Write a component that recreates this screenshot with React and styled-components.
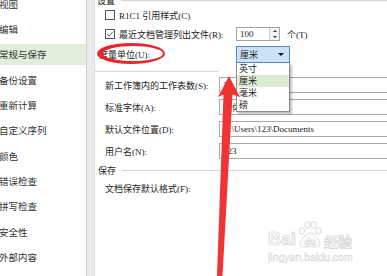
import React from 'react';
import styled, { createGlobalStyle } from 'styled-components';

const GlobalStyle = createGlobalStyle`
  html, body {
    margin: 0;
    padding: 0;
    background: #fff;
  }
  body {
    font-family: "Liberation Serif", "Noto Sans CJK SC", serif;
    color: #222;
  }
`;

const Window = styled.div`
  position: relative;
  display: flex;
  width: 387px;
  height: 276px;
  overflow: hidden;
  background: #fff;
`;

/* 左侧分类列表 */
const Sidebar = styled.ul`
  flex: 0 0 86px;
  margin: -7px 0 0;
  padding: 0;
  list-style: none;
  font-family: "Noto Sans CJK SC", sans-serif;
  font-size: 9.5px;
  color: #333;
`;

const NavItem = styled.li`
  height: 21px;
  margin-bottom: 4.35px;
  display: flex;
  align-items: center;
  text-indent: -1px;
  white-space: nowrap;
  background: ${(p) => (p.$active ? '#e1eed9' : 'transparent')};
`;

const Splitter = styled.div`
  flex: 0 0 9px;
  box-sizing: border-box;
  border-left: 1px solid #cfcfcf;
  border-right: 1px solid #dcdcdc;
  background: #ececec;
`;

const Panel = styled.div`
  flex: 1;
  min-width: 0;
  display: flex;
  flex-direction: column;
  font-size: 9px;
  overflow: hidden;
`;

const GroupTitle = styled.div`
  display: flex;
  align-items: center;
  height: 12px;
  margin-top: ${(p) => p.$top}px;
  padding-left: ${(p) => p.$indent}px;
  font-family: "Noto Sans CJK SC", sans-serif;
  white-space: nowrap;
  &::after {
    content: '';
    flex: 1;
    height: 1px;
    margin-left: 6px;
    background: #d4d4d4;
  }
`;

const OptionRow = styled.div`
  display: flex;
  align-items: center;
  height: ${(p) => p.$h}px;
  margin-top: ${(p) => p.$top || 0}px;
  padding-left: ${(p) => p.$indent}px;
  white-space: nowrap;
`;

const CheckBox = styled.span`
  flex-shrink: 0;
  width: 10px;
  height: 10px;
  box-sizing: border-box;
  margin-right: 4px;
  border: 1px solid #555;
  background: #fff;
  display: flex;
  align-items: center;
  justify-content: center;
`;

const OptionText = styled.span`
  flex-shrink: 0;
  width: ${(p) => (p.$w ? `${p.$w}px` : 'auto')};
`;

const SpinBox = styled.div`
  display: flex;
  width: 44px;
  height: 14px;
  box-sizing: border-box;
  border: 1px solid #a3a3a3;
  background: #fff;
`;

const SpinValue = styled.span`
  flex: 1;
  padding-left: 3px;
  line-height: 12px;
`;

const SpinButtons = styled.div`
  width: 9px;
  display: flex;
  flex-direction: column;
  border-left: 1px solid #cfcfcf;
  background: #f2f2f2;
`;

const SpinButton = styled.span`
  flex: 1;
  display: flex;
  align-items: center;
  justify-content: center;
  &::before {
    content: '';
    border-left: 2.5px solid transparent;
    border-right: 2.5px solid transparent;
    ${(p) => (p.$up ? 'border-bottom' : 'border-top')}: 2.5px solid #333;
  }
`;

const Unit = styled.span`
  margin-left: 7px;
`;

const SelectWrap = styled.div`
  position: relative;
`;

const SelectBox = styled.div`
  display: flex;
  align-items: center;
  justify-content: space-between;
  width: 54px;
  height: 17px;
  box-sizing: border-box;
  padding: 0 5px 0 3px;
  border: 1px solid #4d8ac6;
  background: #cce3f6;
  font-family: "Noto Sans CJK SC", sans-serif;
`;

const Caret = styled.span`
  width: 0;
  height: 0;
  border-left: 3px solid transparent;
  border-right: 3px solid transparent;
  border-top: 3px solid #111;
`;

/* 展开的下拉列表 */
const DropList = styled.ul`
  position: absolute;
  top: 100%;
  left: 0;
  z-index: 2;
  width: 54px;
  margin: 0;
  padding: 0;
  list-style: none;
  box-sizing: border-box;
  border: 1px solid #8c8c8c;
  border-top: none;
  background: #fff;
  box-shadow: 2px 2px 2px rgba(0, 0, 0, 0.25);
  font-family: "Noto Sans CJK SC", sans-serif;
`;

const DropItem = styled.li`
  height: 12px;
  line-height: 12px;
  padding-left: 2px;
  background: ${(p) => (p.$active ? '#dcebd3' : 'transparent')};
`;

const Divider = styled.div`
  width: 123px;
  height: 1px;
  margin-top: 7px;
  background: #d6d6d6;
`;

const FieldGrid = styled.div`
  display: grid;
  grid-template-columns: 114px 1fr;
  grid-auto-rows: 16px;
  row-gap: 6px;
  margin-top: 5px;
  padding-left: 10px;
  align-items: center;
`;

const FieldLabel = styled.span`
  white-space: nowrap;
`;

const TextField = styled.div`
  height: 16px;
  box-sizing: border-box;
  display: flex;
  align-items: center;
  padding-left: 3px;
  border: 1px solid #a9a9a9;
  border-right: none;
  background: #fff;
  white-space: nowrap;
`;

const Overlay = styled.svg`
  position: absolute;
  left: 0;
  top: 0;
  z-index: 3;
  pointer-events: none;
`;

const Watermark = styled.div`
  position: absolute;
  left: 268px;
  top: 221px;
  z-index: 1;
  display: flex;
  flex-direction: column;
  pointer-events: none;
`;

const WmLogo = styled.div`
  display: flex;
  align-items: flex-end;
  gap: 2px;
`;

const WmWord = styled.span`
  font-family: ${(p) => (p.$cjk ? '"Noto Sans CJK SC", sans-serif' : '"Liberation Sans", sans-serif')};
  font-weight: 700;
  font-size: ${(p) => p.$size}px;
  line-height: 1;
  color: #fbfbfb;
  -webkit-text-stroke: 0.7px #d4d4d4;
`;

const WmUrl = styled.span`
  margin-top: 4px;
  font-family: "Liberation Sans", sans-serif;
  font-size: 10.5px;
  line-height: 1;
  color: #fbfbfb;
  -webkit-text-stroke: 0.5px #d8d8d8;
`;

const navItems = [
  '视图', '编辑', '常规与保存', '备份设置', '重新计算', '自定义序列',
  '颜色', '错误检查', '拼写检查', '安全性', '外部内容',
];

const units = ['英寸', '厘米', '毫米', '磅'];

const fields = [
  ['新工作簿内的工作表数(S):', '1'],
  ['标准字体(A):', '宋体'],
  ['默认文件位置(D):', 'C:\\Users\\123\\Documents'],
  ['用户名(N):', '123'],
];

const Paw = () => (
  <svg width="24" height="27" viewBox="0 0 24 27">
    <g fill="#fbfbfb" stroke="#d2d2d2" strokeWidth="0.8">
      <ellipse cx="4" cy="10" rx="2.6" ry="3.3" />
      <ellipse cx="9.5" cy="4" rx="2.7" ry="3.4" />
      <ellipse cx="15.5" cy="4" rx="2.7" ry="3.4" />
      <ellipse cx="20.5" cy="10" rx="2.6" ry="3.3" />
      <path d="M12 12 C16 12 22 19 22 22.5 C22 26 18 26.5 12 25.5 C6 26.5 2 26 2 22.5 C2 19 8 12 12 12 Z" />
    </g>
    <text
      x="12"
      y="24"
      textAnchor="middle"
      fontFamily="Liberation Sans, sans-serif"
      fontWeight="700"
      fontSize="9"
      fill="#fbfbfb"
      stroke="#d2d2d2"
      strokeWidth="0.5"
    >
      du
    </text>
  </svg>
);

const App = () => (
  <Window>
    <GlobalStyle />
    <Sidebar>
      {navItems.map((name) => (
        <NavItem key={name} $active={name === '常规与保存'}>
          {name}
        </NavItem>
      ))}
    </Sidebar>
    <Splitter />
    <Panel>
      <GroupTitle $top={-6} $indent={2}>设置</GroupTitle>
      <OptionRow $h={18} $indent={10}>
        <CheckBox />
        <OptionText>R1C1 引用样式(C)</OptionText>
      </OptionRow>
      <OptionRow $h={20} $indent={10}>
        <CheckBox>
          <svg width="8" height="8" viewBox="0 0 8 8">
            <path d="M1 4 L3.2 6.2 L7 1.5" fill="none" stroke="#666" strokeWidth="1" />
          </svg>
        </CheckBox>
        <OptionText $w={117}>最近文档管理列出文件(R):</OptionText>
        <SpinBox>
          <SpinValue>100</SpinValue>
          <SpinButtons>
            <SpinButton $up />
            <SpinButton />
          </SpinButtons>
        </SpinBox>
        <Unit>个(T)</Unit>
      </OptionRow>
      <OptionRow $h={20} $indent={4}>
        <OptionText $w={137}>度量单位(U):</OptionText>
        <SelectWrap>
          <SelectBox>
            厘米
            <Caret />
          </SelectBox>
          <DropList>
            {units.map((u) => (
              <DropItem key={u} $active={u === '厘米'}>
                {u}
              </DropItem>
            ))}
          </DropList>
        </SelectWrap>
      </OptionRow>
      <Divider />
      <FieldGrid>
        {fields.map(([label, value]) => (
          <React.Fragment key={label}>
            <FieldLabel>{label}</FieldLabel>
            <TextField>{value}</TextField>
          </React.Fragment>
        ))}
      </FieldGrid>
      <GroupTitle $top={5} $indent={3}>保存</GroupTitle>
      <OptionRow $h={16} $top={4} $indent={10}>
        <OptionText>文档保存默认格式(F):</OptionText>
      </OptionRow>
    </Panel>

    <Watermark>
      <WmLogo>
        <WmWord $size={18}>Bai</WmWord>
        <Paw />
        <WmWord $size={14} $cjk>经验</WmWord>
      </WmLogo>
      <WmUrl>jingyan.baidu.com</WmUrl>
    </Watermark>

    {/* 红色圈注与箭头 */}
    <Overlay width="387" height="276" viewBox="0 0 387 276">
      <path
        fillRule="evenodd"
        fill="#e8262b"
        d="M97 53.5 A34 10.5 0 1 0 165 53.5 A34 10.5 0 1 0 97 53.5 Z
           M103 53.5 A30 7.6 0 1 0 163 53.5 A30 7.6 0 1 0 103 53.5 Z"
      />
      <polygon
        fill="#f03333"
        points="229,76 240,97 232.5,94.5 222.5,276 217,276 223.5,94.5 218,97"
      />
    </Overlay>
  </Window>
);

export default App;
